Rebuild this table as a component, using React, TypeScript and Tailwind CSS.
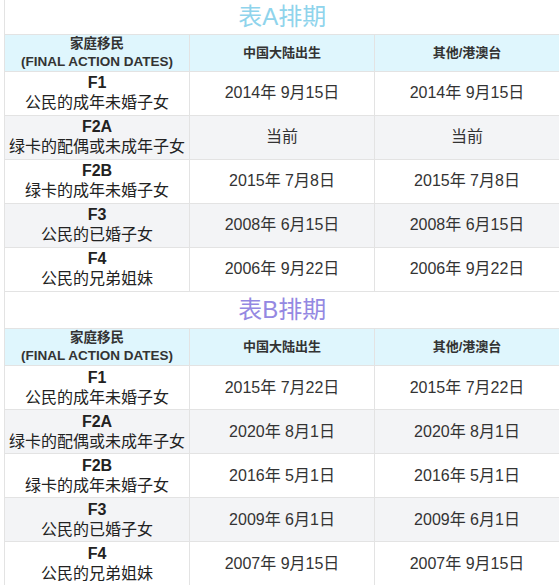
import React from "react"

type Row = { code: string; label: string; china: string; other: string }

const tableA: Row[] = [
  { code: "F1", label: "公民的成年未婚子女", china: "2014年 9月15日", other: "2014年 9月15日" },
  { code: "F2A", label: "绿卡的配偶或未成年子女", china: "当前", other: "当前" },
  { code: "F2B", label: "绿卡的成年未婚子女", china: "2015年 7月8日", other: "2015年 7月8日" },
  { code: "F3", label: "公民的已婚子女", china: "2008年 6月15日", other: "2008年 6月15日" },
  { code: "F4", label: "公民的兄弟姐妹", china: "2006年 9月22日", other: "2006年 9月22日" }
]

const tableB: Row[] = [
  { code: "F1", label: "公民的成年未婚子女", china: "2015年 7月22日", other: "2015年 7月22日" },
  { code: "F2A", label: "绿卡的配偶或未成年子女", china: "2020年 8月1日", other: "2020年 8月1日" },
  { code: "F2B", label: "绿卡的成年未婚子女", china: "2016年 5月1日", other: "2016年 5月1日" },
  { code: "F3", label: "公民的已婚子女", china: "2009年 6月1日", other: "2009年 6月1日" },
  { code: "F4", label: "公民的兄弟姐妹", china: "2007年 9月15日", other: "2007年 9月15日" }
]

function BulletinTable({
  title,
  titleClass,
  titleHeight,
  rows
}: {
  title: string
  titleClass: string
  titleHeight: string
  rows: Row[]
}) {
  return (
    <table className="w-[555px] table-fixed border-collapse">
      <colgroup>
        <col className="w-[185px]" />
        <col className="w-[185px]" />
        <col className="w-[185px]" />
      </colgroup>
      <tbody>
        <tr>
          <td
            colSpan={3}
            className={`${titleHeight} border-l border-b border-[#e3e3e3] p-0 text-center align-middle text-[24px] leading-none ${titleClass}`}
          >
            {title}
          </td>
        </tr>
        <tr className="h-[37px] bg-[#dff6fd]">
          <td className="border border-[#e3e3e3] p-0 text-center text-[13.5px] font-bold leading-[18px] text-[#333]">
            家庭移民
            <br />
            (FINAL ACTION DATES)
          </td>
          <td className="border border-[#e3e3e3] p-0 text-center text-[13px] font-bold leading-[18px] text-[#333]">
            中国大陆出生
          </td>
          <td className="border border-[#e3e3e3] p-0 text-center text-[13px] font-bold leading-[18px] text-[#333]">
            其他/港澳台
          </td>
        </tr>
        {rows.map((r, i) => (
          <tr key={r.code} className={`h-[44px] ${i % 2 === 1 ? "bg-[#f3f4f6]" : "bg-white"}`}>
            <td className="border border-[#e3e3e3] p-0 text-center text-[16px] leading-[20px] text-[#222]">
              <span className="font-bold">{r.code}</span>
              <br />
              {r.label}
            </td>
            <td className="border border-[#e3e3e3] p-0 text-center text-[16px] leading-[20px] text-[#333]">
              {r.china}
            </td>
            <td className="border border-[#e3e3e3] p-0 text-center text-[16px] leading-[20px] text-[#333]">
              {r.other}
            </td>
          </tr>
        ))}
      </tbody>
    </table>
  )
}

export default function App() {
  return (
    <div
      className="h-[585px] w-[559px] overflow-hidden bg-white pl-[4px]"
      style={{ fontFamily: '"Liberation Sans", "Noto Sans CJK SC", sans-serif' }}
    >
      <BulletinTable title="表A排期" titleClass="text-[#8fd4ec]" titleHeight="h-[34px]" rows={tableA} />
      <BulletinTable title="表B排期" titleClass="text-[#9488e2]" titleHeight="h-[37px]" rows={tableB} />
    </div>
  )
}
